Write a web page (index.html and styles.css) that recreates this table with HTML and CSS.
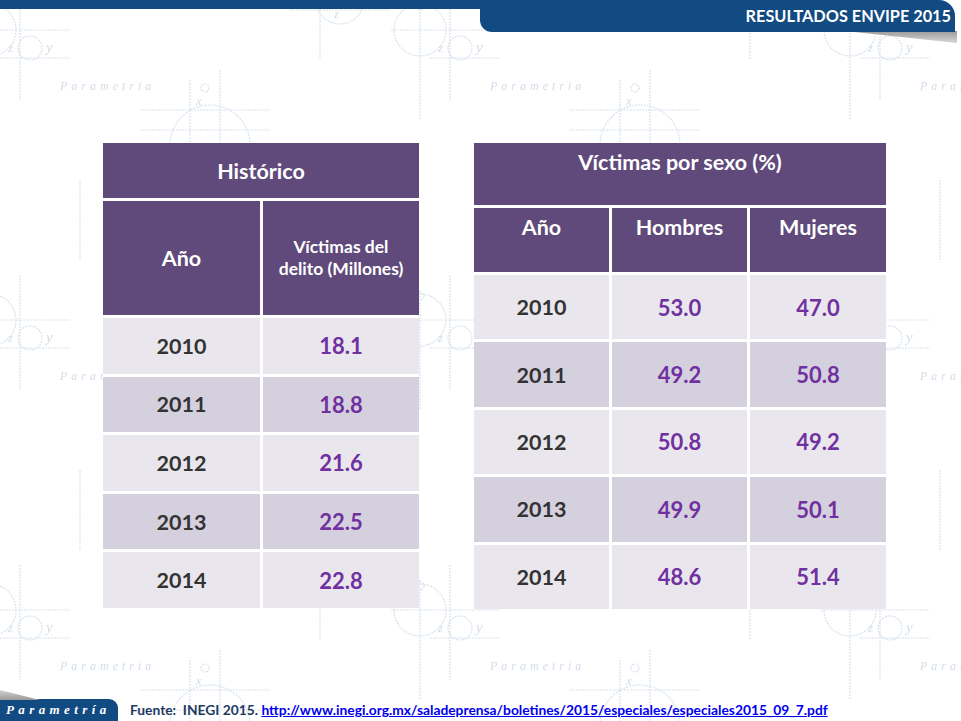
FILE: index.html
```html
<!DOCTYPE html>
<html lang="es">
<head>
<meta charset="utf-8">
<title>Resultados ENVIPE 2015</title>
<link rel="stylesheet" href="styles.css">
</head>
<body>
<div class="slide">
  <svg class="bg" width="961" height="721" aria-hidden="true">
    <defs>
      <pattern id="motif" x="-40" y="-30" width="430" height="290" patternUnits="userSpaceOnUse">
        <g fill="none" stroke="#d8e2ed" stroke-width="1.2" stroke-dasharray="2 1">
          <line x1="30" y1="30" x2="30" y2="150"/>
          <line x1="-5" y1="60" x2="110" y2="60"/>
          <line x1="60" y1="15" x2="60" y2="130"/>
          <circle cx="30" cy="60" r="26"/>
          <circle cx="30" cy="36" r="4"/>
          <circle cx="70" cy="78" r="12"/>
          <line x1="40" y1="88" x2="110" y2="88"/>
          <line x1="230" y1="110" x2="230" y2="230"/>
          <line x1="180" y1="140" x2="310" y2="140"/>
          <line x1="180" y1="160" x2="310" y2="160"/>
          <line x1="260" y1="100" x2="260" y2="210"/>
          <path d="M290 175 A40 40 0 0 0 210 175"/>
          <circle cx="245" cy="118" r="4"/>
          <line x1="360" y1="0" x2="360" y2="90"/>
          <line x1="330" y1="40" x2="430" y2="40"/>
          <circle cx="380" cy="30" r="24"/>
          <line x1="120" y1="210" x2="120" y2="290"/>
        </g>
        <g fill="#d3dce8" font-family="'Liberation Serif', serif" font-style="italic">
          <text x="48" y="82" font-size="13">z</text>
          <text x="86" y="82" font-size="15">y</text>
          <text x="236" y="135" font-size="13">x</text>
          <text x="100" y="120" font-size="12" letter-spacing="4">Parametria</text>
          <text x="270" y="250" font-size="12" letter-spacing="4">Parametria</text>
          <text x="374" y="48" font-size="13">z</text>
        </g>
      </pattern>
    </defs>
    <rect width="961" height="721" fill="url(#motif)"/>
  </svg>

  <header class="topbar">
    <div class="band"></div>
    <div class="tab">RESULTADOS ENVIPE 2015</div>
  </header>
  <div class="tab-shadow"></div>

  <main class="content">
    <section class="table t1">
      <div class="cell head title span2">Histórico</div>
      <div class="cell head big">Año</div>
      <div class="cell head small">Víctimas del<br>delito (Millones)</div>

      <div class="cell light year">2010</div><div class="cell light num">18.1</div>
      <div class="cell dark year">2011</div><div class="cell dark num">18.8</div>
      <div class="cell light year">2012</div><div class="cell light num">21.6</div>
      <div class="cell dark year">2013</div><div class="cell dark num">22.5</div>
      <div class="cell light year">2014</div><div class="cell light num">22.8</div>
    </section>

    <section class="table t2">
      <div class="cell head title top span3">Víctimas por sexo (%)</div>
      <div class="cell head big top">Año</div>
      <div class="cell head big top">Hombres</div>
      <div class="cell head big top">Mujeres</div>

      <div class="cell light year">2010</div><div class="cell light num">53.0</div><div class="cell light num">47.0</div>
      <div class="cell dark year">2011</div><div class="cell dark num">49.2</div><div class="cell dark num">50.8</div>
      <div class="cell light year">2012</div><div class="cell light num">50.8</div><div class="cell light num">49.2</div>
      <div class="cell dark year">2013</div><div class="cell dark num">49.9</div><div class="cell dark num">50.1</div>
      <div class="cell light year">2014</div><div class="cell light num">48.6</div><div class="cell light num">51.4</div>
    </section>
  </main>

  <footer class="footer">
    <div class="logo-shadow"></div>
    <div class="logo">Parametría</div>
    <p class="source">Fuente:&nbsp; INEGI 2015. <a href="#">http://www.inegi.org.mx/saladeprensa/boletines/2015/especiales/especiales2015_09_7.pdf</a></p>
  </footer>
</div>
</body>
</html>
```

FILE: styles.css
```css
html, body {
  margin: 0;
  padding: 0;
  background: #ffffff;
}

.slide {
  position: relative;
  width: 961px;
  height: 721px;
  overflow: hidden;
  font-family: "Lato", "Open Sans", "DejaVu Sans", sans-serif;
  display: flex;
  flex-direction: column;
}

.bg {
  position: absolute;
  left: 0;
  top: 0;
  z-index: 0;
}

.topbar {
  position: relative;
  z-index: 2;
  display: flex;
  align-items: flex-start;
  padding-right: 6px;
  height: 33px;
}

.band {
  flex: 1;
  height: 9px;
  background: #124a82;
}

.tab {
  width: 475px;
  height: 32px;
  background: #124a82;
  border-radius: 0 16px 0 12px;
  color: #ffffff;
  font-weight: 700;
  font-size: 16.3px;
  line-height: 32px;
  text-align: right;
  padding-right: 4px;
  box-sizing: border-box;
}

.tab-shadow {
  position: absolute;
  z-index: 1;
  left: 845px;
  top: 31px;
  width: 112px;
  height: 12px;
  background: linear-gradient(180deg, #9a9a9a, #d8d8d8);
  clip-path: polygon(0 0, 100% 0, 100% 100%);
}

.content {
  position: relative;
  z-index: 1;
  display: flex;
  align-items: flex-start;
  gap: 55px;
  padding: 110px 0 0 103px;
  flex: 1;
}

.table {
  display: grid;
  gap: 3px;
  background: #ffffff;
}

.t1 {
  width: 316px;
  height: 465px;
  grid-template-columns: 157px 156px;
  grid-template-rows: 55px 114px repeat(5, 1fr);
}

.t2 {
  width: 412px;
  height: 466px;
  grid-template-columns: 135px 135px 136px;
  grid-template-rows: 62px 64px repeat(5, 1fr);
}

.span2 { grid-column: span 2; }
.span3 { grid-column: span 3; }

.cell {
  display: flex;
  align-items: center;
  justify-content: center;
  text-align: center;
  font-weight: 700;
}

.head {
  background: #5f4a7b;
  color: #ffffff;
}

.title {
  font-size: 21.5px;
}

.big {
  font-size: 21.5px;
}

.small {
  font-size: 17.5px;
  line-height: 22px;
}

.top {
  align-items: flex-start;
  padding-top: 6px;
}

.light {
  background: #e9e7ed;
}

.dark {
  background: #d5d0de;
}

.year {
  color: #333333;
  font-size: 21.5px;
}

.num {
  color: #7030a0;
  font-size: 22px;
}

.footer {
  position: relative;
  z-index: 2;
  display: flex;
  align-items: flex-end;
  height: 31px;
}

.logo-shadow {
  position: absolute;
  left: 0;
  top: 0;
  width: 40px;
  height: 10px;
  background: linear-gradient(180deg, #d4d4d4, #9a9a9a);
  clip-path: polygon(0 0, 0 100%, 100% 100%);
}

.logo {
  width: 118px;
  height: 22px;
  background: #124a82;
  border-radius: 0 9px 0 0;
  color: #ffffff;
  font-family: "Liberation Serif", serif;
  font-style: italic;
  font-weight: 700;
  font-size: 13px;
  letter-spacing: 4.4px;
  line-height: 22px;
  padding-left: 6px;
  box-sizing: border-box;
  white-space: nowrap;
  overflow: hidden;
}

.source {
  margin: 0 0 3px 12px;
  font-size: 13.8px;
  font-weight: 700;
  color: #1d3a63;
  white-space: nowrap;
}

.source a {
  color: #0000ee;
  text-decoration: underline;
}
```
